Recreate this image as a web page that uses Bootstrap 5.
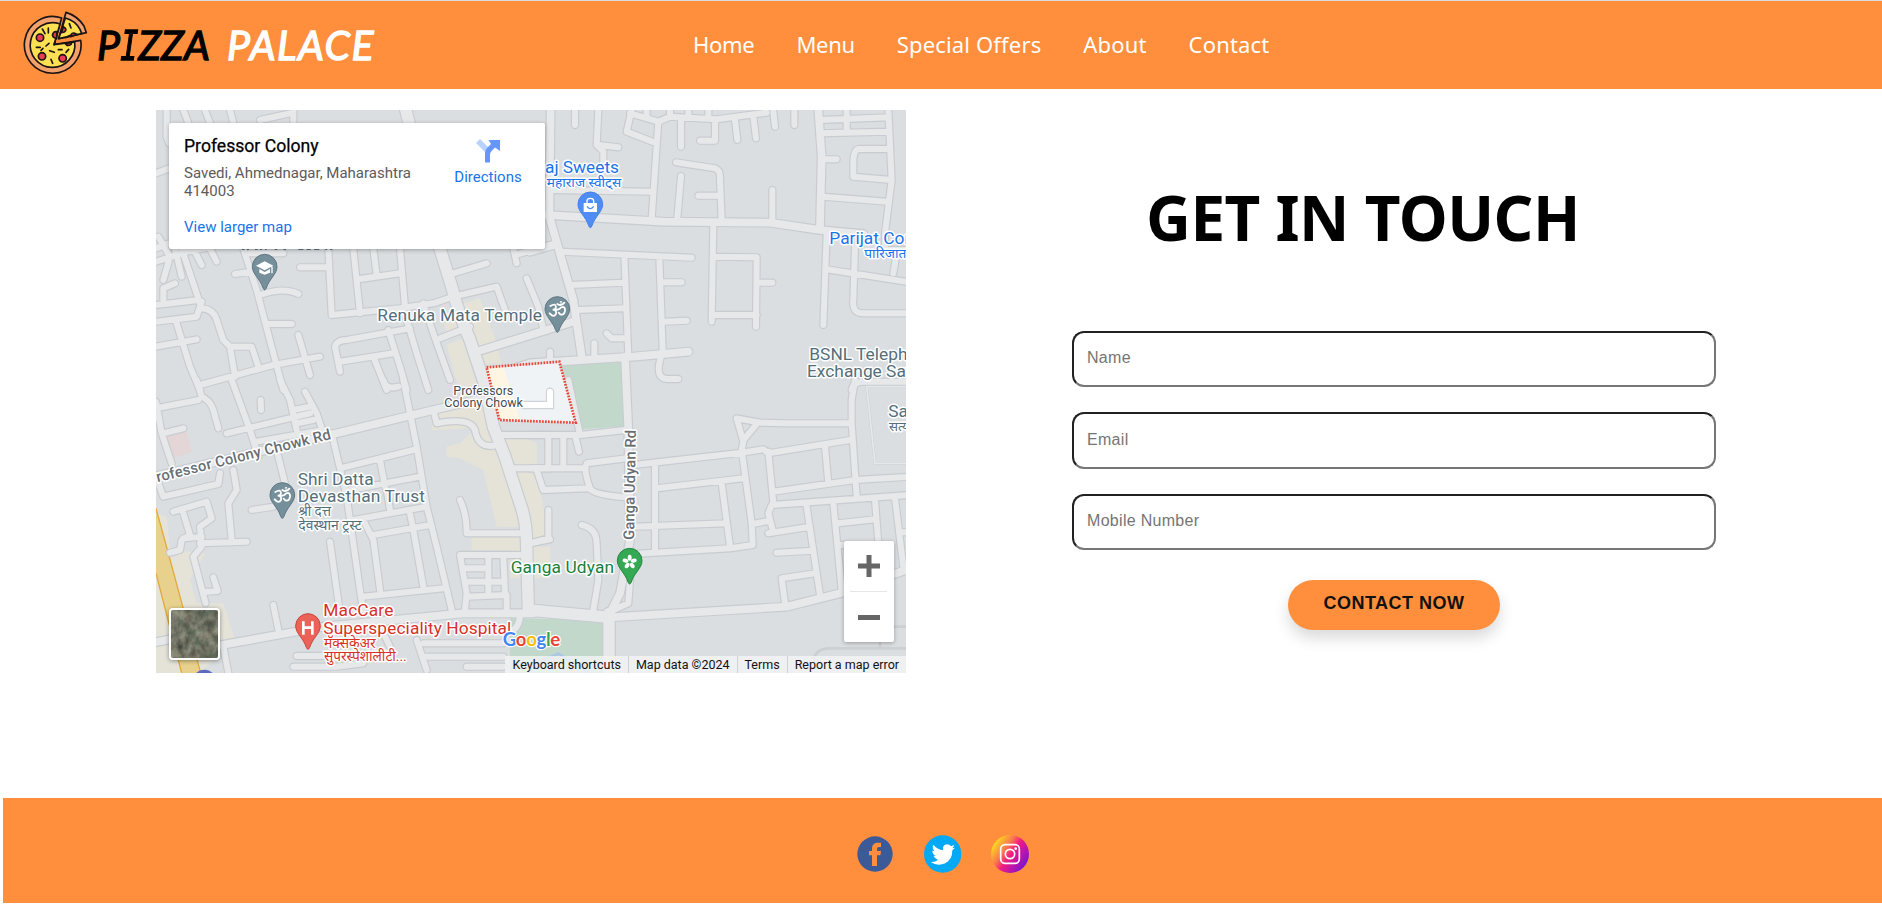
<!DOCTYPE html>
<html lang="en">
<head>
<meta charset="utf-8">
<meta name="viewport" content="width=device-width, initial-scale=1">
<title>Pizza Palace - Contact</title>
<link href="https://cdn.jsdelivr.net/npm/bootstrap@5.3.0/dist/css/bootstrap.min.css" rel="stylesheet">
<style>
  :root { --brand: #ff8f3c; }
  body { background: #fff; overflow: hidden; color: #000; height: 904px; }
  .topbar { height: 89px; background: var(--brand); border-top: 1px solid #dadce0; padding: 0; }
  .logo-wrap { width: 693px; padding-left: 23px; }
  .logo-wrap svg { margin-top: -3px; }
  .brand-text { font: italic 400 41px/50px Lato, sans-serif; margin-left: 9px; white-space: nowrap; -webkit-text-stroke: 1.3px currentColor; padding-bottom: 1px; }
  .brand-first { display: inline-block; width: 130px; letter-spacing: .2px; }
  .brand-second { letter-spacing: 1.5px; }
  .brand-text .serif-i { display: inline-block; font-family: "DejaVu Sans Mono", monospace; font-size: 41px; line-height: 40px; transform: scaleX(.74); margin: 0 -4px 0 -3px; }
  .menu-links { gap: 42px; padding-bottom: 2px; }
  .menu-links .nav-link { font: 400 22px/30px "Noto Sans", sans-serif; color: #fff; padding: 0; white-space: nowrap; }
  .menu-links .nav-item:nth-child(-n+2) .nav-link { letter-spacing: -.3px; }
  .menu-links .nav-item:nth-child(n+3) .nav-link { letter-spacing: .16px; }
  .content { height: 709px; }
  .map-frame { width: 750px; height: 563px; margin: 21px 0 0 156px; overflow: hidden; background: #dadee1; font-family: Roboto, sans-serif; }
  .map-frame text { font-family: Roboto, "Noto Sans Devanagari", sans-serif; paint-order: stroke; stroke: #fff; stroke-width: 3px; stroke-linejoin: round; }
  .place-card { left: 13px; top: 13px; width: 376px; height: 126px; border-radius: 2px; box-shadow: 0 1px 4px rgba(0,0,0,.3); padding: 12px 14px 12px 15px; }
  .place-name { font-size: 17.6px; line-height: 22px; color: #000; font-weight: 400; -webkit-text-stroke: .25px #000; }
  .place-address { font-size: 15px; line-height: 18px; color: #5b5b5b; width: 240px; margin-top: 7px; }
  .map-link { font-size: 15px; line-height: 18px; color: #1a73e8; text-decoration: none; }
  .larger { margin-top: 18px; display: block; }
  .directions { width: 96px; padding-top: 4px; margin-right: -5px; }
  .directions span { margin-top: 5px; }
  .zoom-box { right: 12px; bottom: 31px; width: 50px; height: 101px; box-shadow: 0 1px 4px rgba(0,0,0,.3); border-radius: 2px; }
  .satellite { left: 13px; bottom: 13px; width: 51px; height: 52px; border: 2px solid #fff; border-radius: 4px; box-shadow: 0 1px 4px rgba(0,0,0,.4); overflow: hidden; }
  .map-legal { right: 0; bottom: 0; height: 17px; background: rgba(245,245,245,.78); font-size: 12.5px; line-height: 17px; color: #111; white-space: nowrap; }
  .map-legal span { padding: 0 7px; border-left: 1px solid #d0d3d5; }
  .map-legal span:first-child { border: 0; }
  .contact-pane { width: 644px; margin-left: 166px; }
  .contact-title { font: 700 62px/70px "Noto Sans", sans-serif; margin: 93px 0 79px 74px; white-space: nowrap; letter-spacing: -.5px; }
  .contact-input { display: block; width: 644px; height: 56.4px; border: 2px inset #767676; border-radius: 12px; padding: 0 13px 2px; margin-bottom: 25px; font: 16px "Liberation Sans", Arial, sans-serif; letter-spacing: .3px; background: #fff; }
  .contact-input::placeholder { color: #757575; opacity: 1; }
  .btn-contact { width: 212px; height: 50px; margin: 30px auto 0; border: 0; border-radius: 25px; background: var(--brand); color: #111; font: 700 18px/47px "Liberation Sans", Arial, sans-serif; letter-spacing: .5px; padding: 0 0 3px; box-shadow: 0 8px 15px rgba(0,0,0,.15); }
  .btn-contact:hover { background: var(--brand); }
  .site-footer { height: 105px; margin-left: 3px; background: var(--brand); padding-top: 37px; padding-left: 854px; }
  .site-footer svg { display: block; }
</style>
</head>
<body>
<nav class="navbar topbar flex-nowrap justify-content-start">
  <a class="logo-wrap d-flex align-items-center text-decoration-none flex-shrink-0" href="#">
    <svg width="65" height="66" viewBox="0 0 195 198">
      <g stroke="#1b1515" stroke-width="5" stroke-linejoin="round" stroke-linecap="round">
        <path d="M116 21 A85 85 0 1 0 173 88 L93 101Z" fill="#f4a06b"/>
        <path d="M111 39 A67 67 0 1 0 155 93 L93 101Z" fill="#ffe052"/>
        <path d="M129 4 Q163 14 183 45 L190 65 L107 83Z" fill="#f4a06b"/>
        <path d="M127 21 Q157 29 171 55 L176 68 L107 83Z" fill="#ffe052"/>
        <g fill="#ea3d51"><circle cx="51" cy="80" r="11"/><circle cx="57" cy="136" r="11"/><circle cx="119" cy="142" r="11"/><path d="M101 62A10 10 0 0 0 92 79L101 83ZM121 47Q135 55 124 63L115 65ZM143 77Q144 66 153 66L161 70ZM127 98L146 94Q145 105 132 103Z"/></g>
        <path d="M58 54L66 68M76 51V66M40 109H52M78 97L69 105M60 112L54 118M80 119L94 124M84 145L89 157M106 116H117M137 115L129 124M96 94L93 101M139 38L144 51M128 80L142 73" fill="none"/>
      </g>
    </svg>
    <span class="brand-text text-black"><span class="brand-first">P<span class="serif-i">I</span>ZZA</span><span class="brand-second text-white">PALACE</span></span>
  </a>
  <ul class="navbar-nav flex-row menu-links">
    <li class="nav-item"><a class="nav-link" href="#">Home</a></li>
    <li class="nav-item"><a class="nav-link" href="#">Menu</a></li>
    <li class="nav-item"><a class="nav-link" href="#">Special Offers</a></li>
    <li class="nav-item"><a class="nav-link" href="#">About</a></li>
    <li class="nav-item"><a class="nav-link" href="#">Contact</a></li>
  </ul>
</nav>

<main class="content d-flex align-items-start">
  <section class="map-frame position-relative flex-shrink-0">
    <svg class="d-block" width="750" height="563" viewBox="18 30 2250 1689">
      <defs>
        <g id="minor" fill="none" stroke-linecap="round" stroke-linejoin="round">
          <path d="M50 30V110L57 130M100 30L115 69M165 30L180 69M240 30L250 69M330 60L420 40M430 30V69M18 220L57 205M18 445L57 430M18 485L110 455L190 440M25 410L60 470L40 540M75 446L95 530M95 446L150 610M130 446L155 495M180 446L200 485M40 600V565L75 550M18 615L145 600M18 665L140 650L155 605M150 625Q190 625 200 660L220 720L240 740H305L325 800M80 670L120 800L150 870M18 740L140 718M240 740L255 830M280 446L320 570L370 760L400 870M255 522L300 515M330 585Q400 560 445 582M350 672H425M150 855L370 795L510 770M445 705L480 825M300 460H400M450 502H530M535 446L545 645L750 625L850 610L910 590L1040 560L1065 630M610 446L630 640M630 537L750 520M670 446L680 525M750 446L765 620M910 520L1010 490M1090 446L1100 490M1095 465L1200 435M1130 535L1165 620L1180 690M760 625L800 760L835 870M820 610L850 700L900 840M870 715L960 680M570 815L555 740Q560 720 590 720L780 685M570 785L730 760M670 770L710 870M715 690L750 800L770 870"/>
          <path transform="translate(1140 0)" d="M135 30V75M205 30L200 135L220 155V190M205 135L265 142M305 30L290 95L380 130M300 40L385 65L420 50L560 58L710 38M385 65L365 355M420 30V50M475 30V50M535 30V50M350 30V50M453 60V140M555 60V122H510M615 60L622 120M670 50L678 115M730 35L735 80M793 30V75M870 60L1075 52M870 100L1075 95M950 30V95M1075 30L1085 240L1065 400V440M1075 147H985Q970 150 970 190V230L1085 240M875 178H920M880 290L1070 305M70 270L365 275M438 187L555 205Q572 210 570 240L575 360M453 228L442 355M505 287H570M727 270V365M550 370L545 665M550 470L680 472L678 680M690 548H727M550 645H680M95 455L485 473M283 465L295 770M388 475L398 750L388 790Q380 835 410 837H445M120 555L280 548M140 630L280 625M400 547H455M400 665L470 662M290 715H245L230 700M193 730V770M60 755V785M890 400L880 675M890 508L1140 547M975 440L970 600Q965 640 1000 640H1140M1060 450H1140M1100 460L1090 520M965 870Q970 845 1000 845H1140"/>
          <path transform="translate(0 840)" d="M18 85L145 60M140 0L155 50Q180 60 190 90L205 145M18 65L35 160L65 250M40 160L100 145M245 0L300 150L325 230M230 160L480 100M333 90L332 60M390 0L420 60L440 150M465 35L500 100L520 160M430 90L480 80M440 130L490 120M320 185L520 150M545 160L590 350L640 700M700 0Q705 30 745 20M760 0L800 200L830 380L860 500L905 690M570 265L790 210M690 240L705 320M600 330L810 290M710 330L720 390M610 420L830 380M640 420L670 480L690 630M670 465L840 435M780 400L790 450L820 620M640 650L880 625M540 485L570 700M380 210L405 310M305 390L370 380M18 290L40 350L205 312L210 280M250 270L260 330L235 370L245 480M150 490L290 485M70 395L170 365L185 415L150 440L155 500L130 530L167 670M100 400L120 465L95 480L90 510L60 518M100 475L155 470M190 592L203 633L170 635M370 675L385 750M220 800L235 878M930 360Q950 400 950 460H1110M930 525H1110M930 525L950 640L945 690M950 565H1010M955 605H1060M1015 530V640M1060 530L1065 640M950 650L1070 645V690M850 90L860 130Q960 110 975 150Q985 210 1040 195M1050 165H1200M1080 265H1200M1140 490L1200 478M690 740L720 800M800 780L830 870M820 790H1060M820 830H1060M950 860H1060M440 828H520M430 860H560L640 850M1110 700Q1110 745 1080 755"/>
          <path transform="translate(1140 840)" d="M115 0L150 165M0 165H150L285 150M55 165V265M100 165V265M135 165L147 215M0 265H165M20 270L40 330L175 325M290 235L170 250Q160 270 180 325Q190 345 290 352M310 255L635 218L700 208L715 220L960 180M375 260V515M380 325L640 295M575 310L600 500M635 210L665 430L668 495L600 505L310 522M310 440L590 430M635 210L640 185L620 115L690 128L765 130H960M640 180L682 130M715 215L730 370M730 335L975 300L1140 290M885 200L895 310M975 0L965 60V130L980 350M1140 345L725 375L715 400L728 450M670 432L720 422M715 460L840 440M830 380L870 645M740 518L850 512M855 580L755 595L765 670M910 370L935 630M925 430L1035 418M1035 360L1045 490M1095 355L1120 560M930 495H950M1115 457H1140M155 435Q200 445 200 490L205 600L190 690M55 390V475L0 490M300 600L295 670L250 690"/>
        </g>
        <g id="middle" fill="none" stroke-linecap="round" stroke-linejoin="round">
          <path d="M990 752L1270 665M1202 20L1198 350L1270 600L1295 770M1000 835L1140 790L1450 770L1615 755M1190 345L1540 365L1860 368L2010 390L2140 402M2005 30L2015 170L2010 380M1425 770L1435 990L1440 1320L1410 1480L1375 1550M-10 1135L560 1000L850 930L1000 895M0 1630L90 1612M215 1635L520 1580L940 1540H1150M1380 1552L1910 1520L2070 1480L2290 1402M1140 455L1210 435"/>
        </g>
        <g id="major" fill="none" stroke-linecap="round" stroke-linejoin="round">
          <path d="M765 20L870 446L905 560Q925 640 960 720L1000 840L1030 980L1065 1070L1110 1210Q1130 1260 1130 1340L1135 1530L1380 1552M1377 1540V1730"/>
        </g>
        <path id="pin" d="M0-71A37 37 0 0 1 37-34C37-12 14 2 5 30Q0 42-5 30C-14 2-37-12-37-34A37 37 0 0 1 0-71Z"/>
      </defs>
      <rect x="18" y="30" width="2250" height="1689" fill="#dadee1"/>
      <!-- built-up blocks -->
      <g fill="#e5e3d8">
        <path d="M940 610L990 595L1030 700L1055 790L1000 793ZM880 670L915 660L925 690L890 700ZM890 735L940 715L975 840L1010 900L1040 990L1050 1050L985 1040L960 985L845 990L850 930L950 910L915 830Z"/>
        <path d="M890 1040L930 1030L960 1000L1050 1060L1110 1280H1040L1000 1110L950 1085L930 1075L890 1070ZM1050 1000L1115 1010L1160 1030V1100L1080 1090ZM965 1305H1110V1350H965ZM1080 1110H1155L1185 1240V1320L1120 1310ZM1080 1340H1200V1435H1080Z"/>
        <path d="M18 1240L50 1250L60 1350L165 1360L120 1440L140 1510L220 1510L255 1620L150 1719H18ZM1140 1030H1160V1100H1140Z"/>
      </g>
      <path d="M50 1010L110 995L125 1055L70 1075Z" fill="#e4d5d6"/>
      <path d="M18 1220L55 1360L150 1719H95L18 1420Z" fill="#e8d18c"/>
      <path d="M18 1225L55 1360L152 1719M18 1420L95 1719" fill="none" stroke="#e2a93b" stroke-width="4"/>
      <path d="M1230 795L1418 786L1425 978L1295 988ZM1080 1555L1362 1560V1719H1080Z" fill="#c1d8cb"/>
      <path d="M1140 1712L1180 1680L1225 1661L1255 1680L1320 1719" fill="none" stroke="#a9c6e8" stroke-width="8"/>
      <path d="M2150 858L2175 1090H2268M1990 1680Q1995 1650 2030 1645H2268M2200 1580H2268M2190 1620V1645" fill="none" stroke="#ccd0d2" stroke-width="8"/>
      <path d="M2150 858H2268M2150 858L2175 1090H2268" fill="none" stroke="#e6e8ea" stroke-width="5"/>
      <g stroke="#c8ccd0"><use href="#minor" stroke-width="25"/><use href="#middle" stroke-width="30"/><use href="#major" stroke-width="41"/></g>
      <g stroke="#e6e8ea"><use href="#minor" stroke-width="18"/><use href="#middle" stroke-width="23"/><use href="#major" stroke-width="34"/></g>
      <!-- outlined colony -->
      <path d="M1010 802L1228 785L1277 968L1048 960Z" fill="#f0f3f5"/>
      <path d="M1010 802L1060 798L1110 962L1048 960Z" fill="#fef5e3"/>
      <path d="M1120 915H1200V875" fill="none" stroke="#cfd4d8" stroke-width="25" stroke-linecap="round"/><path d="M1120 915H1200V875" fill="none" stroke="#fff" stroke-width="18" stroke-linecap="round"/>
      <path d="M1010 802L1228 785L1277 968L1048 960Z" fill="none" stroke="#e94235" stroke-width="8" stroke-dasharray="5 4"/>

      <!-- markers -->
      <g fill="#758f9b" stroke="#5d7682" stroke-width="3"><use href="#pin" x="344" y="534"/><use href="#pin" x="1222" y="661"/><use href="#pin" x="397" y="1219"/></g>
      <use href="#pin" x="1321" y="347" fill="#4f8df5" stroke="#4380e8" stroke-width="3"/>
      <use href="#pin" x="1439" y="1416" fill="#34a853" stroke="#20873e" stroke-width="3"/>
      <use href="#pin" x="474" y="1612" fill="#ea6258" stroke="#c9443d" stroke-width="3"/>
      <g fill="#fff">
        <path d="M318 497L344 484L370 497L344 511ZM328 507L344 516L360 507V518L344 524L328 518ZM364 500H368V520H364Z"/>
        <path d="M1301 309H1341V336H1301Z"/><path d="M1311 310V303A10 8 0 0 1 1331 303V310" fill="none" stroke="#fff" stroke-width="4"/><path d="M1311 319Q1321 333 1331 319" fill="none" stroke="#4f8df5" stroke-width="4"/>
        <path d="M456 1564H464V1579H483V1564H491V1604H483V1587H464V1604H456Z"/>
        <g transform="translate(1439 1386)"><ellipse cy="-13" rx="6" ry="9"/><ellipse cy="-13" rx="6" ry="9" transform="rotate(72)"/><ellipse cy="-13" rx="6" ry="9" transform="rotate(144)"/><ellipse cy="-13" rx="6" ry="9" transform="rotate(216)"/><ellipse cy="-13" rx="6" ry="9" transform="rotate(288)"/></g>
      </g>
      <g id="om" fill="none" stroke="#fff" stroke-width="5.5" stroke-linecap="round"><path d="M1201 618Q1217 608 1218 621Q1217 629 1208 629Q1221 630 1218 642Q1211 654 1199 640M1218 630Q1230 628 1234 622Q1246 618 1245 632Q1243 647 1231 643L1226 638M1222 612Q1234 620 1243 608"/><circle cx="1233" cy="607" r="1"/></g>
      <use href="#om" x="-825" y="558"/>
      <circle cx="163" cy="1745" r="36" fill="#5c6bc0"/>
      <path d="M275 448H284M290 448H297M315 448H323M330 448H336M345 448H350M374 448H382M400 448H408M445 448H460M470 448H482M492 448H508M526 448H532M540 448H547" stroke="#5d7682" stroke-width="4"/>

      <!-- place labels -->
      <g style="font-size:52px" fill="#546e7a">
        <text style="stroke-width:9px" x="682" y="662" textLength="494">Renuka Mata Temple</text>
        <text style="stroke-width:9px" x="443" y="1154" textLength="228">Shri Datta</text>
        <text style="stroke-width:9px" x="443" y="1207" textLength="382">Devasthan Trust</text>
        <text style="stroke-width:9px;font-size:42px" x="445" y="1249" textLength="98" lengthAdjust="spacingAndGlyphs">श्री दत्त</text>
        <text style="stroke-width:9px;font-size:42px" x="445" y="1290" textLength="190" lengthAdjust="spacingAndGlyphs">देवस्थान ट्रस्ट</text>
        <text style="stroke-width:9px" x="1978" y="779">BSNL Telephone</text>
        <text style="stroke-width:9px" x="1971" y="832">Exchange Savedi</text>
        <text style="stroke-width:9px" x="2215" y="952">Sai</text>
        <text style="stroke-width:9px;font-size:40px" x="2217" y="992">सत्य</text>
      </g>
      <g style="font-size:52px" fill="#1a73e8">
        <text style="stroke-width:9px" x="1185" y="218" textLength="222">aj Sweets</text>
        <text style="stroke-width:9px;font-size:40px" x="1190" y="262" textLength="224" lengthAdjust="spacingAndGlyphs">महाराज स्वीट्स</text>
        <text style="stroke-width:9px" x="2038" y="432">Parijat Corner</text>
        <text style="stroke-width:9px;font-size:40px" x="2143" y="475" textLength="126" lengthAdjust="spacingAndGlyphs">पारिजात</text>
      </g>
      <text style="stroke-width:9px;font-size:52px" fill="#188038" x="1082" y="1418" textLength="310">Ganga Udyan</text>
      <g style="font-size:52px" fill="#d93025">
        <text style="stroke-width:9px" x="520" y="1548" textLength="210">MacCare</text>
        <text style="stroke-width:9px" x="520" y="1601" textLength="564">Superspeciality Hospital</text>
        <text style="stroke-width:9px;font-size:42px" x="522" y="1643" textLength="155" lengthAdjust="spacingAndGlyphs">मॅक्सकेअर</text>
        <text style="stroke-width:9px;font-size:42px" x="522" y="1684" textLength="248" lengthAdjust="spacingAndGlyphs">सुपरस्पेशालीटी...</text>
      </g>
      <g style="font-size:38px" fill="#454a4e" text-anchor="middle">
        <text style="stroke-width:8px" x="1000" y="884" textLength="180">Professors</text>
        <text style="stroke-width:8px" x="1001" y="922" textLength="236">Colony Chowk</text>
      </g>
      <g style="font-size:45px;font-weight:500" fill="#696e73">
        <text style="stroke-width:9px" transform="translate(-6 1154) rotate(-14)" textLength="568">Professor Colony Chowk Rd</text>
        <text style="stroke-width:9px" transform="translate(1452 1320) rotate(-89)" textLength="330">Ganga Udyan Rd</text>
      </g>
      <text style="font-size:56px;stroke-width:7px;font-family:Lato,sans-serif;font-weight:700" x="1058" y="1638" textLength="173"><tspan fill="#4285f4">G</tspan><tspan fill="#ea4335">o</tspan><tspan fill="#fbbc04">o</tspan><tspan fill="#4285f4">g</tspan><tspan fill="#34a853">l</tspan><tspan fill="#ea4335">e</tspan></text>
    </svg>

    <div class="place-card position-absolute bg-white d-flex justify-content-between">
      <div>
        <div class="place-name">Professor Colony</div>
        <div class="place-address">Savedi, Ahmednagar, Maharashtra 414003</div>
        <a class="map-link larger" href="#">View larger map</a>
      </div>
      <a class="map-link directions text-center" href="#">
        <svg class="d-block mx-auto" width="24" height="24" viewBox="0 0 24 24"><path d="M0 4L4 0L13 9L9 13Z" fill="#b9d1fd"/><path d="M9 23.500V14Q9 11 11.500 8.500L15 5L12.500 1H24V12L19 8.500L15.500 12Q14 13.500 14 16V23.500Z" fill="#6496fb"/></svg>
        <span class="d-block">Directions</span>
      </a>
    </div>

    <div class="satellite position-absolute">
      <svg class="d-block" width="47" height="48">
        <filter id="terrain" x="0" y="0" width="100%" height="100%" color-interpolation-filters="sRGB"><feTurbulence type="fractalNoise" baseFrequency=".14 .1" numOctaves="4" seed="8"/><feColorMatrix values=".4 .2 0 0 .14  .4 .1 0 0 .2  .36 .1 0 0 .16  0 0 0 0 1"/></filter>
        <rect width="47" height="48" filter="url(#terrain)"/>
      </svg>
    </div>
    <div class="zoom-box position-absolute bg-white">
      <svg class="d-block" width="50" height="101"><path d="M14 25H36M25 14V36M14 76.500H36" stroke="#666" stroke-width="5"/><path d="M6 50.500H43" stroke="#e6e6e6"/></svg>
    </div>
    <div class="map-legal position-absolute d-flex"><span>Keyboard shortcuts</span><span>Map data ©2024</span><span>Terms</span><span>Report a map error</span></div>
  </section>

  <form class="contact-pane flex-shrink-0">
    <h1 class="contact-title">GET IN TOUCH</h1>
    <input class="contact-input" type="text" placeholder="Name" aria-label="Name">
    <input class="contact-input" type="email" placeholder="Email" aria-label="Email">
    <input class="contact-input" type="tel" placeholder="Mobile Number" aria-label="Mobile Number">
    <button class="btn btn-contact d-block" type="button">CONTACT NOW</button>
  </form>
</main>

<footer class="site-footer d-flex">
  <a href="#" aria-label="Facebook"><svg width="36" height="38" viewBox="0 0 108 114"><circle cx="54" cy="57" r="53" fill="#3d5a98"/><path d="M45 93V61H36V48H45V40Q45 23 63 23H72V36H65Q60 36 60 42V48H72L70 61H60V93Z" fill="#ff8f3c"/></svg></a>
  <a href="#" aria-label="Twitter" class="ms-4 ps-1"><svg width="42" height="38" viewBox="-8 0 126 114"><circle cx="57" cy="57" r="56" fill="#03a9f4"/><path d="M22 78Q36 79 44 71Q34 69 31 60H38Q27 55 27 44L34 46Q25 37 30 26Q42 41 59 42Q57 27 71 25Q79 25 83 31L93 27Q91 33 87 37L95 35L87 43Q87 71 66 82Q42 92 22 78Z" fill="#fff" transform="translate(-1 3)"/></svg></a>
  <a href="#" aria-label="Instagram" class="ms-4"><svg width="45" height="38" viewBox="-12 0 135 114"><defs><linearGradient id="ig" x1="0" y1=".15" x2="1" y2=".85"><stop offset=".08" stop-color="#fddb20"/><stop offset=".35" stop-color="#fb7a4c"/><stop offset=".52" stop-color="#f01c82"/><stop offset=".75" stop-color="#b114b2"/><stop offset="1" stop-color="#5a16e0"/></linearGradient></defs><circle cx="57" cy="57" r="57" fill="url(#ig)"/><g fill="none" stroke="#fff" stroke-width="5"><rect x="29" y="29" width="56" height="56" rx="13"/><circle cx="57" cy="57" r="14"/></g><circle cx="74" cy="41" r="4" fill="#fff"/></svg></a>
</footer>
<script src="https://cdn.jsdelivr.net/npm/bootstrap@5.3.0/dist/js/bootstrap.bundle.min.js"></script>
</body>
</html>
